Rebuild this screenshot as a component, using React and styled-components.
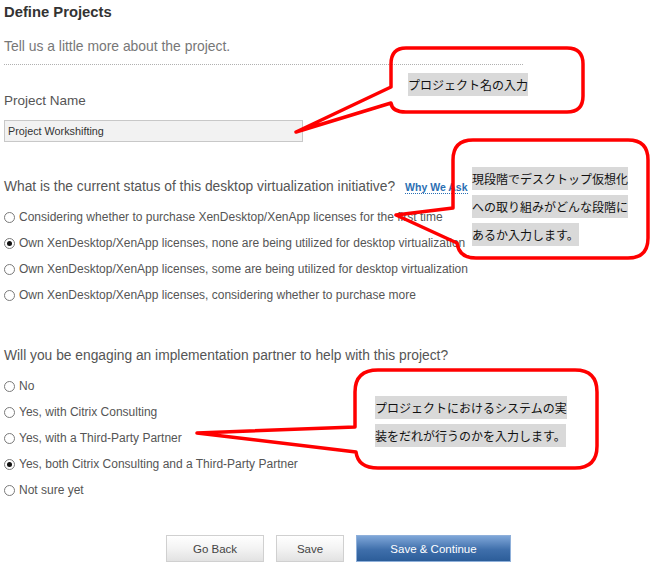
import React from "react";
import styled, { createGlobalStyle } from "styled-components";

const GlobalStyle = createGlobalStyle`
  html, body {
    margin: 0;
    padding: 0;
    background: #ffffff;
  }
  body {
    font-family: "Liberation Sans", Arial, sans-serif;
  }
`;

const Page = styled.div`
  position: relative;
  width: 650px;
  height: 565px;
  padding: 4px 4px 0;
  box-sizing: border-box;
  overflow: hidden;
`;

const Title = styled.h1`
  margin: 0;
  font-size: 14.8px;
  line-height: 16px;
  font-weight: bold;
  color: #333333;
`;

const Intro = styled.p`
  margin: 18px 0 0;
  font-size: 13.9px;
  line-height: 16px;
  color: #777777;
`;

const Divider = styled.div`
  margin-top: 10px;
  width: 519px;
  border-top: 1px dotted #b0b0b0;
`;

const Label = styled.div`
  margin-top: ${(p) => p.$gap}px;
  font-size: ${(p) => p.$size || 13.8}px;
  line-height: 16px;
  color: #555555;
  white-space: nowrap;
`;

const TextInput = styled.div`
  margin-top: 11px;
  width: 299px;
  height: 22px;
  box-sizing: border-box;
  display: flex;
  align-items: center;
  padding-left: 3px;
  background: #f2f2f2;
  border: 1px solid #c8c8c8;
  font-size: 10.8px;
  color: #333333;
`;

const WhyLink = styled.span`
  margin-left: 10px;
  font-size: 10.5px;
  font-weight: bold;
  color: #2b6fb3;
  border-bottom: 1px dotted #2b6fb3;
`;

const OptionList = styled.div`
  margin-top: 9px;
  display: flex;
  flex-direction: column;
`;

const Option = styled.div`
  height: 26px;
  display: flex;
  align-items: center;
  gap: 4px;
  font-size: 12px;
  color: #555555;
  white-space: nowrap;
`;

const Radio = styled.span`
  width: 11px;
  height: 11px;
  box-sizing: border-box;
  border-radius: 50%;
  border: 1px solid #7a7a7a;
  background: #ffffff;
  display: flex;
  align-items: center;
  justify-content: center;
  flex-shrink: 0;

  &::after {
    content: "";
    width: 5px;
    height: 5px;
    border-radius: 50%;
    background: ${(p) => (p.$checked ? "#111111" : "transparent")};
  }
`;

const ButtonRow = styled.div`
  margin-top: 32px;
  padding-left: 162px;
  display: flex;
  gap: 12px;
`;

const Button = styled.div`
  width: ${(p) => p.$width}px;
  height: 27px;
  box-sizing: border-box;
  display: flex;
  align-items: center;
  justify-content: center;
  font-size: 11.5px;
  border: 1px solid ${(p) => (p.$primary ? "#8fb0da" : "#d0d0d0")};
  color: ${(p) => (p.$primary ? "#ffffff" : "#444444")};
  background: ${(p) =>
    p.$primary
      ? "linear-gradient(#7ea6d8, #3f6fab 55%, #2c5d99)"
      : "linear-gradient(#ffffff, #f3f3f3 50%, #e2e2e2)"};
`;

const Overlay = styled.svg`
  position: absolute;
  left: 0;
  top: 0;
  pointer-events: none;
`;

const Note = styled.div`
  position: absolute;
  left: ${(p) => p.$x}px;
  top: ${(p) => p.$y}px;
  display: flex;
  flex-direction: column;
  align-items: flex-start;
  gap: 5px;
`;

const NoteLine = styled.span`
  display: block;
  height: 23px;
  line-height: 23px;
  background: #d9d9d9;
  font-family: "Noto Sans CJK JP", sans-serif;
  font-size: 12px;
  color: #111111;
  white-space: nowrap;
`;

const bubbles = [
  "M406,48 H567 Q583,48 583,64 V96 Q583,112 567,112 H406 Q392,112 391,103 L296,132 L391,87 V64 Q391,48 406,48 Z",
  "M473,140 H628 Q648,140 648,160 V238 Q648,258 628,258 H476 Q459,258 457,243 L396,215 L453,208 V160 Q453,140 473,140 Z",
  "M378,370 H575 Q597,370 597,392 V446 Q597,468 575,468 H378 Q358,468 356,452 L197,433 L355,427 V392 Q355,370 378,370 Z",
];

const statusOptions = [
  "Considering whether to purchase XenDesktop/XenApp licenses for the first time",
  "Own XenDesktop/XenApp licenses, none are being utilized for desktop virtualization",
  "Own XenDesktop/XenApp licenses, some are being utilized for desktop virtualization",
  "Own XenDesktop/XenApp licenses, considering whether to purchase more",
];

const partnerOptions = [
  "No",
  "Yes, with Citrix Consulting",
  "Yes, with a Third-Party Partner",
  "Yes, both Citrix Consulting and a Third-Party Partner",
  "Not sure yet",
];

const App = () => {
  return (
    <>
      <GlobalStyle />
      <Page>
        <Title>Define Projects</Title>
        <Intro>Tell us a little more about the project.</Intro>
        <Divider />

        <Label $gap={28} $size={13.5}>
          Project Name
        </Label>
        <TextInput>Project Workshifting</TextInput>

        <Label $gap={37}>
          What is the current status of this desktop virtualization initiative?
          <WhyLink>Why We Ask</WhyLink>
        </Label>
        <OptionList>
          {statusOptions.map((text, i) => (
            <Option key={text}>
              <Radio $checked={i === 1} />
              {text}
            </Option>
          ))}
        </OptionList>

        <Label $gap={40}>
          Will you be engaging an implementation partner to help with this project?
        </Label>
        <OptionList>
          {partnerOptions.map((text, i) => (
            <Option key={text}>
              <Radio $checked={i === 3} />
              {text}
            </Option>
          ))}
        </OptionList>

        <ButtonRow>
          <Button $width={98}>Go Back</Button>
          <Button $width={68}>Save</Button>
          <Button $width={155} $primary>
            Save &amp; Continue
          </Button>
        </ButtonRow>

        <Overlay width="650" height="565" viewBox="0 0 650 565">
          {bubbles.map((d) => (
            <path
              key={d}
              d={d}
              fill="none"
              stroke="#ff0000"
              strokeWidth="3.5"
              strokeLinejoin="round"
            />
          ))}
        </Overlay>

        <Note $x={408} $y={73}>
          <NoteLine>プロジェクト名の入力</NoteLine>
        </Note>
        <Note $x={472} $y={167}>
          <NoteLine>現段階でデスクトップ仮想化</NoteLine>
          <NoteLine>への取り組みがどんな段階に</NoteLine>
          <NoteLine>あるか入力します。</NoteLine>
        </Note>
        <Note $x={375} $y={396}>
          <NoteLine>プロジェクトにおけるシステムの実</NoteLine>
          <NoteLine>装をだれが行うのかを入力します。</NoteLine>
        </Note>
      </Page>
    </>
  );
};

export default App;
